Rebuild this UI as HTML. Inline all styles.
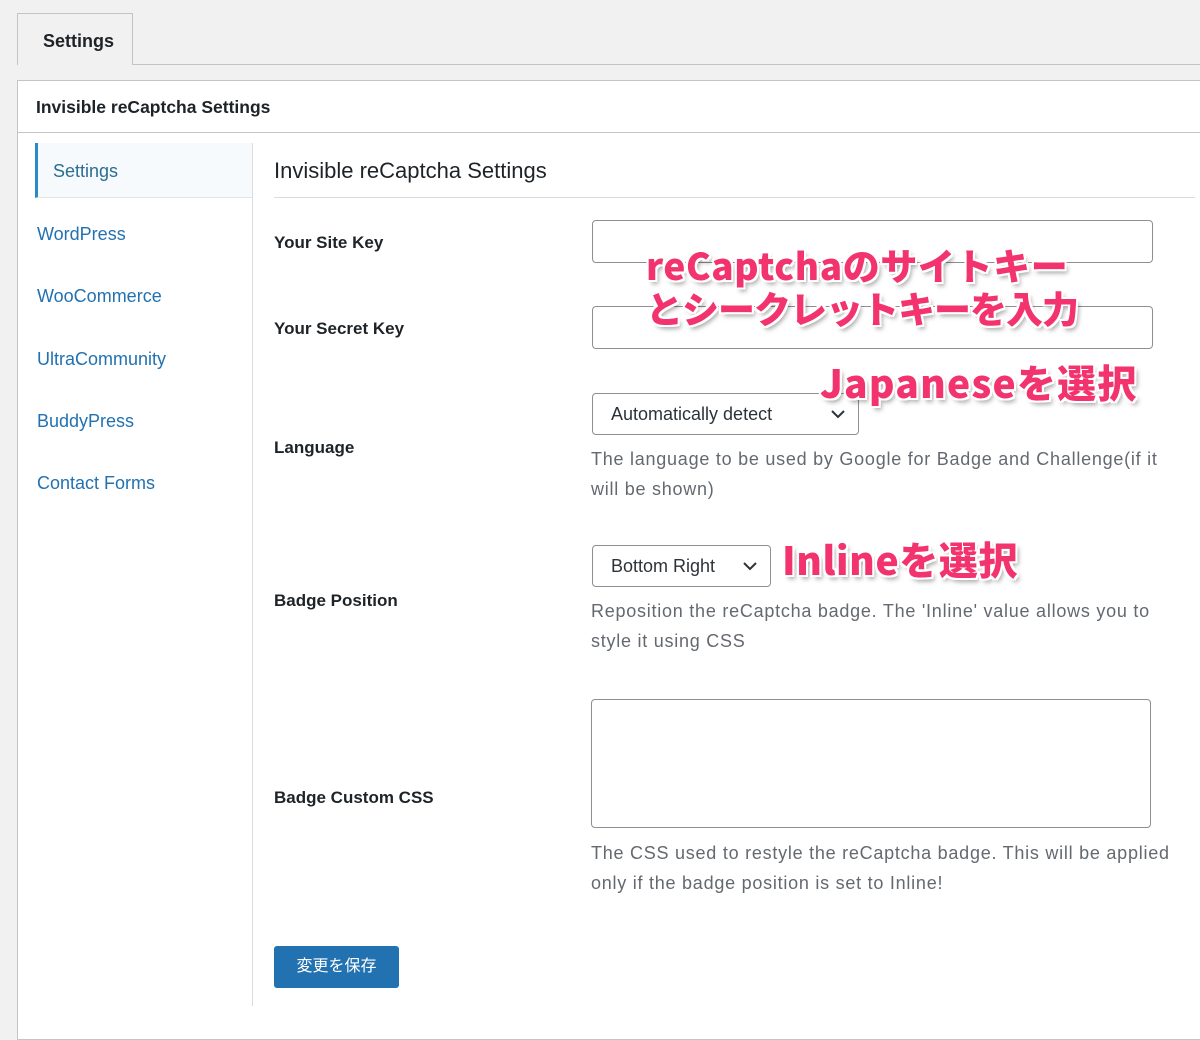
<!DOCTYPE html>
<html><head><meta charset="utf-8"><style>
*{box-sizing:border-box;margin:0;padding:0}
body{width:1200px;height:1006px;background:#f1f1f1;font-family:"Liberation Sans","Noto Sans CJK JP",sans-serif;position:relative;overflow:hidden;color:#1d2327}
.a{position:absolute}
.tab{left:17px;top:13px;width:116px;height:52px;border:1px solid #c3c4c7;border-bottom:none;background:#f1f1f1;font-weight:bold;font-size:18px;padding:17px 0 0 25px;z-index:2}
.tabline{left:17px;top:64px;width:1183px;height:1px;background:#c3c4c7}
.panel{left:17px;top:80px;width:1190px;height:960px;background:#fff;border:1px solid #c3c4c7}
.hdr{left:36px;top:97px;font-weight:bold;font-size:17.5px}
.hline{left:17px;top:132px;width:1183px;height:1px;background:#c3c4c7}
.side{left:252px;top:143px;width:1px;height:863px;background:#dcdcde}
.act{left:35px;top:143px;width:217px;height:55px;background:#f6fafc;border-left:3px solid #2b8ac0;border-bottom:1px solid #e5e5e5}
.mi{left:37px;font-size:18px;color:#2271b1}
.h2{left:274px;top:158px;font-size:22px;color:#1d2327}
.h2l{left:274px;top:197px;width:921px;height:1px;background:#dcdcde}
.lb{left:274px;font-weight:bold;font-size:17px}
.in{border:1px solid #8c8f94;border-radius:4px;background:#fff}
.sel{font-size:18px;padding:10px 0 0 18px;color:#2c3338}
.sel svg{position:absolute;right:12px;top:15px}
.ds{left:591px;font-size:18px;letter-spacing:0.75px;color:#646970;line-height:30px;white-space:nowrap}
.pk{font-family:"Noto Sans CJK JP",sans-serif;font-weight:900;color:#f2336e;font-size:37px;line-height:43px;white-space:nowrap;
text-shadow:-2px 0 #fff,2px 0 #fff,0 -2px #fff,0 2px #fff,-2px -2px #fff,2px 2px #fff,-2px 2px #fff,2px -2px #fff,3px 4px 5px rgba(0,0,0,.35);z-index:5}
.btn{left:274px;top:946px;width:125px;height:42px;background:#2271b1;border-radius:3px;color:#fff;font-size:16px;text-align:center;line-height:42px}
</style></head><body>
<div class="a tabline"></div>
<div class="a tab">Settings</div>
<div class="a panel"></div>
<div class="a hdr">Invisible reCaptcha Settings</div>
<div class="a hline"></div>
<div class="a side"></div>
<div class="a act"></div>
<div class="a mi" style="left:53px;top:161px;color:#2a6e92">Settings</div>
<div class="a mi" style="top:224px">WordPress</div>
<div class="a mi" style="top:286px">WooCommerce</div>
<div class="a mi" style="top:349px">UltraCommunity</div>
<div class="a mi" style="top:411px">BuddyPress</div>
<div class="a mi" style="top:473px">Contact Forms</div>
<div class="a h2">Invisible reCaptcha Settings</div>
<div class="a h2l"></div>
<div class="a lb" style="top:233px">Your Site Key</div>
<div class="a lb" style="top:319px">Your Secret Key</div>
<div class="a lb" style="top:438px">Language</div>
<div class="a lb" style="top:591px">Badge Position</div>
<div class="a lb" style="top:788px">Badge Custom CSS</div>
<div class="a in" style="left:592px;top:220px;width:561px;height:43px"></div>
<div class="a in" style="left:592px;top:306px;width:561px;height:43px"></div>
<div class="a in sel" style="left:592px;top:393px;width:267px;height:42px">Automatically detect<svg width="16" height="10" viewBox="0 0 16 10"><path d="M2 2l6 6 6-6" fill="none" stroke="#2c3338" stroke-width="2"/></svg></div>
<div class="a ds" style="top:444px">The language to be used by Google for Badge and Challenge(if it<br>will be shown)</div>
<div class="a in sel" style="left:592px;top:545px;width:179px;height:42px">Bottom Right<svg width="16" height="10" viewBox="0 0 16 10"><path d="M2 2l6 6 6-6" fill="none" stroke="#2c3338" stroke-width="2"/></svg></div>
<div class="a ds" style="top:596px">Reposition the reCaptcha badge. The 'Inline' value allows you to<br>style it using CSS</div>
<div class="a in" style="left:591px;top:699px;width:560px;height:129px"></div>
<div class="a ds" style="top:838px">The CSS used to restyle the reCaptcha badge. This will be applied<br>only if the badge position is set to Inline!</div>
<div class="a btn">変更を保存</div>
<div class="a pk" style="left:646px;top:243px;letter-spacing:0.6px">reCaptchaのサイトキー</div>
<div class="a pk" style="left:646px;top:286px;letter-spacing:-1px">とシークレットキーを入力</div>
<div class="a pk" style="left:820px;top:361px;font-size:39px;letter-spacing:1.2px">Japaneseを選択</div>
<div class="a pk" style="left:782px;top:538px;font-size:39px;letter-spacing:0.6px">Inlineを選択</div>
</body></html>
